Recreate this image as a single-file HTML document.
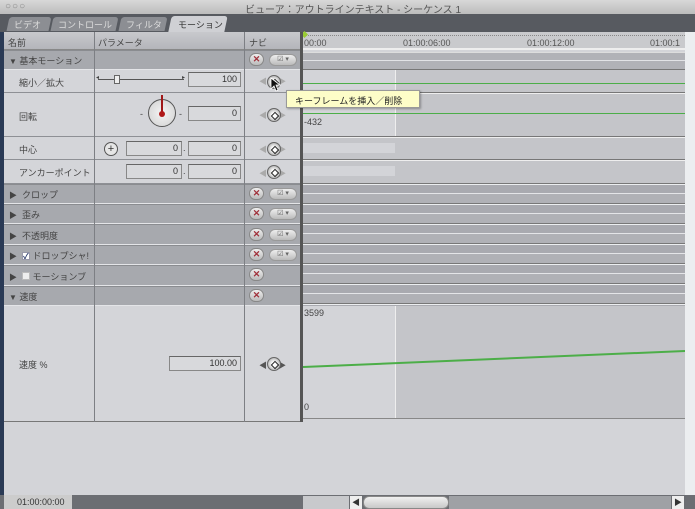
<!DOCTYPE html>
<html><head><meta charset="utf-8"><style>
*{margin:0;padding:0;box-sizing:border-box}
body{width:695px;height:509px;overflow:hidden;background:#d3d4d8;position:relative;font-family:"Liberation Sans","Noto Sans CJK JP",sans-serif;font-size:9px;color:#333}
.a{position:absolute}
.t{font-size:9px;color:#444;white-space:nowrap}
.hdr{background:#a7a9ae;border-bottom:1px solid #e4e5e8;border-top:1px solid #8a8c90}
.lt{background:#d4d5d9;border-bottom:1px solid #8e9095}
.x{width:15px;height:13px;border-radius:7px;background:linear-gradient(#eee,#bbb);border:1px solid #888;color:#a0303a;font-size:9px;font-weight:bold;text-align:center;line-height:11px}
.m{width:28px;height:12px;border-radius:6px;background:linear-gradient(#eee,#bbb);border:1px solid #999;font-size:7px;color:#666;text-align:center;line-height:10px}
.kf{width:14px;height:14px;border-radius:7px;background:radial-gradient(#fff 25%,#ccc 60%,#888);border:1px solid #666}
.kf:after{content:"";position:absolute;left:4px;top:4px;width:4px;height:4px;border:1px solid #222;transform:rotate(45deg)}
.fld{background:#d8d9dc;border:1px solid #888;border-top-color:#666;text-align:right;padding-right:3px;font-size:9px;line-height:13px;height:15px;color:#333}
.tri{font-size:8px;color:#444}
</style></head><body>
<div class="a" style="left:0;top:0;width:4px;height:509px;background:#2a3a55"></div>
<div class="a" style="left:0;top:0;width:695px;height:14px;background:linear-gradient(#d8d8d8,#bcbcbc)"></div>
<div class="a t" style="left:5px;top:1px;font-size:10px;color:#888;letter-spacing:1px">○○○</div>
<div class="a t" style="left:245px;top:1px;font-size:10px;color:#555">ビューア：アウトラインテキスト - シーケンス 1</div>
<div class="a" style="left:0;top:14px;width:695px;height:18px;background:#575a60"></div>
<div class="a" style="left:8px;top:17px;width:42px;height:14px;background:#8c8e93;border-radius:3px 3px 0 0;transform:skewX(-12deg)"></div>
<div class="a t" style="left:14px;top:18px;color:#ddd">ビデオ</div>
<div class="a" style="left:52px;top:17px;width:65px;height:14px;background:#8c8e93;border-radius:3px 3px 0 0;transform:skewX(-12deg)"></div>
<div class="a t" style="left:58px;top:18px;color:#ddd">コントロール</div>
<div class="a" style="left:120px;top:17px;width:46px;height:14px;background:#8c8e93;border-radius:3px 3px 0 0;transform:skewX(-12deg)"></div>
<div class="a t" style="left:126px;top:18px;color:#ddd">フィルタ</div>
<div class="a" style="left:170px;top:16px;width:56px;height:16px;background:#cfd0d4;border-radius:3px 3px 0 0;transform:skewX(-12deg)"></div>
<div class="a t" style="left:178px;top:18px;color:#333">モーション</div>
<div class="a" style="left:685px;top:32px;width:10px;height:463px;background:#eceef0"></div>
<div class="a" style="left:4px;top:32px;width:296px;height:18px;background:linear-gradient(#c8c9cd,#b4b5ba);border-bottom:1px solid #888"></div>
<div class="a t" style="left:8px;top:36px">名前</div>
<div class="a t" style="left:98px;top:36px">パラメータ</div>
<div class="a t" style="left:249px;top:36px">ナビ</div>
<div class="a" style="left:303px;top:32px;width:382px;height:18px;background:#c9cacd;border-bottom:2px solid #eee"></div>
<div class="a" style="left:303px;top:35px;width:382px;height:1px;border-top:1px dotted #888"></div>
<div class="a t" style="left:304px;top:38px;color:#555">00:00</div>
<div class="a t" style="left:403px;top:38px;color:#555">01:00:06:00</div>
<div class="a t" style="left:527px;top:38px;color:#555">01:00:12:00</div>
<div class="a t" style="left:650px;top:38px;color:#555">01:00:1</div>
<div class="a" style="left:302px;top:32px;width:5px;height:5px;background:#9c3;transform:rotate(45deg)"></div>

<div class="a hdr" style="left:4px;top:50px;width:296px;height:20px"></div>
<div class="a t" style="left:9px;top:54px"><span class="tri">▼</span> 基本モーション</div>
<div class="a lt" style="left:4px;top:70px;width:296px;height:23px"></div>
<div class="a t" style="left:19px;top:76px">縮小／拡大</div>
<div class="a lt" style="left:4px;top:93px;width:296px;height:44px"></div>
<div class="a t" style="left:19px;top:110px">回転</div>
<div class="a lt" style="left:4px;top:137px;width:296px;height:23px"></div>
<div class="a t" style="left:19px;top:143px">中心</div>
<div class="a lt" style="left:4px;top:160px;width:296px;height:24px"></div>
<div class="a t" style="left:19px;top:166px">アンカーポイント</div>

<div class="a hdr" style="left:4px;top:184px;width:296px;height:20px"></div>
<div class="a t" style="left:9px;top:188px"><span class="tri">▶</span>&nbsp; クロップ</div>
<div class="a hdr" style="left:4px;top:204px;width:296px;height:20px"></div>
<div class="a t" style="left:9px;top:208px"><span class="tri">▶</span>&nbsp; 歪み</div>
<div class="a hdr" style="left:4px;top:224px;width:296px;height:21px"></div>
<div class="a t" style="left:9px;top:229px"><span class="tri">▶</span>&nbsp; 不透明度</div>
<div class="a hdr" style="left:4px;top:245px;width:296px;height:20px"></div>
<div class="a t" style="left:9px;top:249px"><span class="tri">▶</span>&nbsp; <span style="display:inline-block;width:8px;height:8px;background:#fff;border:1px solid #99a;color:#236;font-size:8px;line-height:7px;font-weight:bold">✓</span> ドロップシャ!</div>
<div class="a hdr" style="left:4px;top:265px;width:296px;height:21px"></div>
<div class="a t" style="left:9px;top:270px"><span class="tri">▶</span>&nbsp; <span style="display:inline-block;width:8px;height:8px;background:#eee;border:1px solid #bbb"></span> モーションブ</div>
<div class="a hdr" style="left:4px;top:286px;width:296px;height:20px"></div>
<div class="a t" style="left:9px;top:290px"><span class="tri">▼</span> 速度</div>
<div class="a" style="left:4px;top:306px;width:296px;height:116px;background:#d4d5d9;border-bottom:1px solid #777"></div>
<div class="a t" style="left:19px;top:358px">速度 %</div>

<div class="a" style="left:94px;top:32px;width:1px;height:390px;background:#7d7f84"></div>
<div class="a" style="left:244px;top:32px;width:1px;height:390px;background:#7d7f84"></div>
<div class="a" style="left:300px;top:32px;width:3px;height:390px;background:#555"></div>

<div class="a" style="left:98px;top:79px;width:86px;height:1px;background:#555"></div>
<div class="a t" style="left:96px;top:74px;font-size:6px">◂</div>
<div class="a t" style="left:182px;top:74px;font-size:6px">▸</div>
<div class="a" style="left:114px;top:75px;width:6px;height:9px;background:#eee;border:1px solid #666"></div>
<div class="a fld" style="left:188px;top:72px;width:53px">100</div>
<div class="a" style="left:148px;top:99px;width:28px;height:28px;border-radius:50%;border:1px solid #555;background:radial-gradient(#f4f4f4,#d0d0d0)"></div>
<div class="a" style="left:161px;top:95px;width:2px;height:19px;background:#a01818"></div>
<div class="a" style="left:159px;top:111px;width:6px;height:6px;border-radius:50%;background:#b01818"></div>
<div class="a t" style="left:140px;top:109px">-</div><div class="a t" style="left:179px;top:109px">-</div>
<div class="a fld" style="left:188px;top:106px;width:53px">0</div>
<div class="a" style="left:104px;top:142px;width:14px;height:14px;border-radius:50%;border:1px solid #555;background:#e6e6e6;text-align:center;line-height:12px;font-size:11px">+</div>
<div class="a fld" style="left:126px;top:141px;width:56px">0</div>
<div class="a t" style="left:183px;top:143px">.</div>
<div class="a fld" style="left:188px;top:141px;width:53px">0</div>
<div class="a fld" style="left:126px;top:164px;width:56px">0</div>
<div class="a t" style="left:183px;top:166px">.</div>
<div class="a fld" style="left:188px;top:164px;width:53px">0</div>
<div class="a fld" style="left:169px;top:356px;width:72px">100.00</div>

<div class="a x" style="left:249px;top:53px">✕</div><div class="a m" style="left:269px;top:54px">☑ ▾</div>
<div class="a x" style="left:249px;top:187px">✕</div><div class="a m" style="left:269px;top:188px">☑ ▾</div>
<div class="a x" style="left:249px;top:207px">✕</div><div class="a m" style="left:269px;top:208px">☑ ▾</div>
<div class="a x" style="left:249px;top:228px">✕</div><div class="a m" style="left:269px;top:229px">☑ ▾</div>
<div class="a x" style="left:249px;top:248px">✕</div><div class="a m" style="left:269px;top:249px">☑ ▾</div>
<div class="a x" style="left:249px;top:268px">✕</div>
<div class="a x" style="left:249px;top:289px">✕</div>
<div class="a t" style="left:259px;top:76px;color:#aaa;font-size:8px">◀&nbsp;&nbsp;&nbsp;&nbsp;&nbsp;▶</div><div class="a kf" style="left:267px;top:75px"></div>
<div class="a t" style="left:259px;top:110px;color:#aaa;font-size:8px">◀&nbsp;&nbsp;&nbsp;&nbsp;&nbsp;▶</div><div class="a kf" style="left:267px;top:108px"></div>
<div class="a t" style="left:259px;top:144px;color:#aaa;font-size:8px">◀&nbsp;&nbsp;&nbsp;&nbsp;&nbsp;▶</div><div class="a kf" style="left:267px;top:142px"></div>
<div class="a t" style="left:259px;top:168px;color:#aaa;font-size:8px">◀&nbsp;&nbsp;&nbsp;&nbsp;&nbsp;▶</div><div class="a kf" style="left:267px;top:165px"></div>
<div class="a t" style="left:259px;top:360px;color:#555;font-size:8px">◀&nbsp;&nbsp;&nbsp;&nbsp;&nbsp;▶</div><div class="a kf" style="left:267px;top:357px"></div>

<div class="a" style="left:303px;top:52px;width:382px;height:18px;background:#b1b2b7;border-top:1px solid #ddd;border-bottom:1px solid #777"></div>
<div class="a" style="left:303px;top:60px;width:382px;height:1px;background:#e2e3e6"></div>
<div class="a" style="left:303px;top:70px;width:382px;height:23px;background:#c4c5c9;border-bottom:1px solid #777"></div>
<div class="a" style="left:303px;top:70px;width:92px;height:22px;background:#d3d4d8"></div>
<div class="a" style="left:303px;top:93px;width:382px;height:44px;background:#c4c5c9;border-bottom:1px solid #777;border-top:1px solid #eee"></div>
<div class="a" style="left:303px;top:94px;width:92px;height:42px;background:#d3d4d8"></div>
<div class="a" style="left:395px;top:70px;width:1px;height:66px;background:#eee"></div>
<div class="a" style="left:303px;top:83px;width:382px;height:1px;background:#4cae48"></div>
<div class="a" style="left:303px;top:113px;width:382px;height:1px;background:#4cae48"></div>
<div class="a t" style="left:304px;top:117px">-432</div>
<div class="a" style="left:303px;top:137px;width:382px;height:23px;background:#c4c5c9;border-bottom:1px solid #777;border-top:1px solid #eee"></div>
<div class="a" style="left:303px;top:143px;width:92px;height:10px;background:#d3d4d8"></div>
<div class="a" style="left:303px;top:160px;width:382px;height:24px;background:#c4c5c9;border-bottom:1px solid #777;border-top:1px solid #eee"></div>
<div class="a" style="left:303px;top:166px;width:92px;height:10px;background:#d3d4d8"></div>
<div class="a" style="left:303px;top:184px;width:382px;height:122px;background:repeating-linear-gradient(#eceef0 0,#eceef0 1px,#a9aab0 1px,#a9aab0 9px,#e4e5e8 9px,#e4e5e8 10px,#b0b1b6 10px,#b0b1b6 19px,#777 19px,#777 20px)"></div>
<div class="a" style="left:303px;top:306px;width:382px;height:113px;background:#c4c5c9;border-bottom:1px solid #888"></div>
<div class="a" style="left:303px;top:306px;width:92px;height:112px;background:#d3d4d8"></div>
<div class="a" style="left:395px;top:306px;width:1px;height:112px;background:#eee"></div>
<svg class="a" style="left:303px;top:340px" width="382" height="30"><line x1="0" y1="27" x2="382" y2="11" stroke="#4cae48" stroke-width="2"/></svg>
<div class="a t" style="left:304px;top:308px">3599</div>
<div class="a t" style="left:304px;top:402px">0</div>

<div class="a" style="left:286px;top:90px;width:134px;height:18px;background:#fdfdc8;border:1px solid #999;box-shadow:1px 1px 2px rgba(0,0,0,.3)"></div>
<div class="a t" style="left:295px;top:94px;color:#222">キーフレームを挿入／削除</div>
<svg class="a" style="left:270px;top:77px" width="12" height="16"><path d="M1 1 L1 12 L4 9 L6 14 L8 13 L6 8 L10 8 Z" fill="#111" stroke="#fff" stroke-width="0.8"/></svg>

<div class="a" style="left:0;top:495px;width:695px;height:14px;background:#6c6e73"></div>
<div class="a" style="left:4px;top:495px;width:68px;height:14px;background:#ccc"></div>
<div class="a t" style="left:17px;top:497px;color:#333">01:00:00:00</div>
<div class="a" style="left:303px;top:496px;width:46px;height:13px;background:#c8c9cc"></div>
<div class="a" style="left:350px;top:496px;width:12px;height:13px;background:#eee;font-size:8px;text-align:center;line-height:13px">◀</div>
<div class="a" style="left:363px;top:496px;width:86px;height:13px;border-radius:6px;background:linear-gradient(#f0f0f0,#c8c8c8);border:1px solid #888"></div>
<div class="a" style="left:449px;top:496px;width:222px;height:13px;background:#9fa1a5"></div>
<div class="a" style="left:672px;top:496px;width:12px;height:13px;background:#eee;font-size:8px;text-align:center;line-height:13px">▶</div>
</body></html>
